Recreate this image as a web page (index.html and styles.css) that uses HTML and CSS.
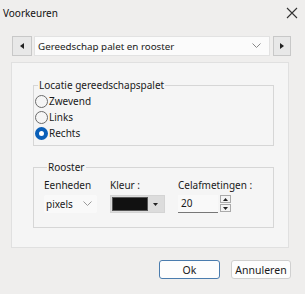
FILE: index.html
```html
<!DOCTYPE html>
<html>
<head>
<meta charset="utf-8">
<link rel="stylesheet" href="styles.css">
</head>
<body>
<div class="window">
  <div class="titlebar">
    <span class="title">Voorkeuren</span>
    <svg class="close" width="12" height="12" viewBox="0 0 12 12"><path d="M1 1 L11 11 M11 1 L1 11" stroke="#333" stroke-width="1.1" fill="none"/></svg>
  </div>
  <div class="nav">
    <div class="navbtn"><svg width="4" height="6" viewBox="0 0 4 6"><path d="M4 0 L0 3 L4 6 Z" fill="#222"/></svg></div>
    <div class="combo">
      <span>Gereedschap palet en rooster</span>
      <svg class="chev" width="9" height="6" viewBox="0 0 9 6"><path d="M0.5 0.5 L4.5 4.5 L8.5 0.5" stroke="#888" fill="none"/></svg>
    </div>
    <div class="navbtn"><svg width="4" height="6" viewBox="0 0 4 6"><path d="M0 0 L4 3 L0 6 Z" fill="#222"/></svg></div>
  </div>
  <div class="panel">
    <fieldset class="group g1">
      <legend>Locatie gereedschapspalet</legend>
      <div class="radio"><span class="dot"></span>Zwevend</div>
      <div class="radio"><span class="dot"></span>Links</div>
      <div class="radio"><span class="dot on"></span>Rechts</div>
    </fieldset>
    <fieldset class="group g2">
      <legend>Rooster</legend>
      <div class="fields">
        <div class="field f1">
          <div class="lbl">Eenheden</div>
          <div class="select"><span>pixels</span><svg width="9" height="6" viewBox="0 0 9 6"><path d="M0.5 0.5 L4.5 4.5 L8.5 0.5" stroke="#999" fill="none"/></svg></div>
        </div>
        <div class="field f2">
          <div class="lbl">Kleur :</div>
          <div class="colorbtn"><span class="swatch"></span><span class="drop"><svg width="5" height="3" viewBox="0 0 5 3"><path d="M0 0 L5 0 L2.5 3 Z" fill="#222"/></svg></span></div>
        </div>
        <div class="field f3">
          <div class="lbl">Celafmetingen :</div>
          <div class="spinrow">
            <div class="spin">20</div>
            <div class="spinbtns">
              <span><svg width="5" height="3" viewBox="0 0 5 3"><path d="M0 3 L5 3 L2.5 0 Z" fill="#222"/></svg></span>
              <span><svg width="5" height="3" viewBox="0 0 5 3"><path d="M0 0 L5 0 L2.5 3 Z" fill="#222"/></svg></span>
            </div>
          </div>
        </div>
      </div>
    </fieldset>
  </div>
  <div class="buttons">
    <button class="btn ok">Ok</button>
    <button class="btn">Annuleren</button>
  </div>
</div>
</body>
</html>
```
FILE: styles.css
```css
* { box-sizing: border-box; }
html, body { margin: 0; padding: 0; }
body {
  width: 305px; height: 294px; overflow: hidden;
  background: #efeeed;
  font-family: "Noto Sans", "Open Sans", sans-serif;
  font-size: 10px; color: #1a1a1a;
}
.window { width: 305px; height: 294px; display: flex; flex-direction: column; }
.titlebar { height: 25px; display: flex; align-items: center; justify-content: space-between; padding: 0 7px 0 3px; }
.title { font-size: 10px; color: #111; }
.nav { display: flex; align-items: center; margin: 11px 0 0 12px; height: 20px; }
.navbtn {
  width: 20px; height: 20px; border: 1px solid #c8c8c8; background: #e8e8e8;
  display: flex; align-items: center; justify-content: center;
}
.combo {
  width: 236px; height: 20px; margin: 0 3px 0 2px; background: #fbfbfb;
  border: 1px solid #e2e2e2; display: flex; align-items: center; justify-content: space-between;
  padding: 0 8px 0 3px; font-size: 9.8px;
}
.navbtn:last-child { width: 18px; }
.panel {
  margin: 6px 0 0 11px; width: 278px; height: 186px; background: #f5f5f5;
  border: 1px solid #e0e0e0; padding: 15px 14px 0 21px;
}
.group {
  border: 1px solid #d6d6d6; margin: 0; padding: 0 0 0 1px; min-width: 0;
}
.group legend { padding: 0 1px; margin-left: 3px; color: #1a1a1a; }
.g1 { height: 68px; }
.radio { display: flex; align-items: center; height: 16px; gap: 1px; }
.radio:first-of-type { margin-top: 1px; }
.dot { width: 13px; height: 13px; border-radius: 50%; border: 1px solid #6b6b6b; background: #f5f5f5; }
.dot.on { border: 4px solid #0a5fb8; background: #fff; }
.g2 { margin-top: 14px; height: 68px; padding: 3px 0 0 10px; }
.fields { display: flex; }
.lbl { height: 17px; line-height: 17px; }
.f1 { width: 66px; }
.f2 { width: 68px; }
.select {
  width: 53px; height: 18px; background: #f9f9f9; border-radius: 2px; margin-top: 1px;
  display: flex; align-items: center; justify-content: space-between; padding: 0 5px 0 2px;
}
.colorbtn { width: 55px; height: 18px; margin-top: 1px; border: 1px solid #d4d4d4; background: #dcdcdc; display: flex; padding: 1px; }
.swatch { width: 36px; height: 100%; background: #111; border: 1px solid #555; }
.drop { flex: 1; display: flex; align-items: center; justify-content: center; }
.spinrow { display: flex; align-items: flex-start; margin-top: 1px; }
.spin { width: 40px; height: 18px; padding-left: 3px; background: #f9f9f9; border-bottom: 1px solid #777; line-height: 17px; }
.spinbtns { margin-left: 2px; display: flex; flex-direction: column; gap: 1px; }
.spinbtns span { width: 11px; height: 8px; border: 1px solid #aaa; background: #f4f4f4; display: flex; align-items: center; justify-content: center; }
.buttons { display: flex; justify-content: flex-end; gap: 11px; padding: 0 14px 0 0; margin-top: 12px; }
.btn {
  font-family: inherit; font-size: 10.5px; color: #1a1a1a; height: 19px; padding: 0;
  background: #fdfdfd; border: 1px solid #d0d0d0; border-radius: 3px;
}
.ok { width: 61px; border: 1px solid #4a7cae; }
.btn:last-child { width: 60px; }
```
